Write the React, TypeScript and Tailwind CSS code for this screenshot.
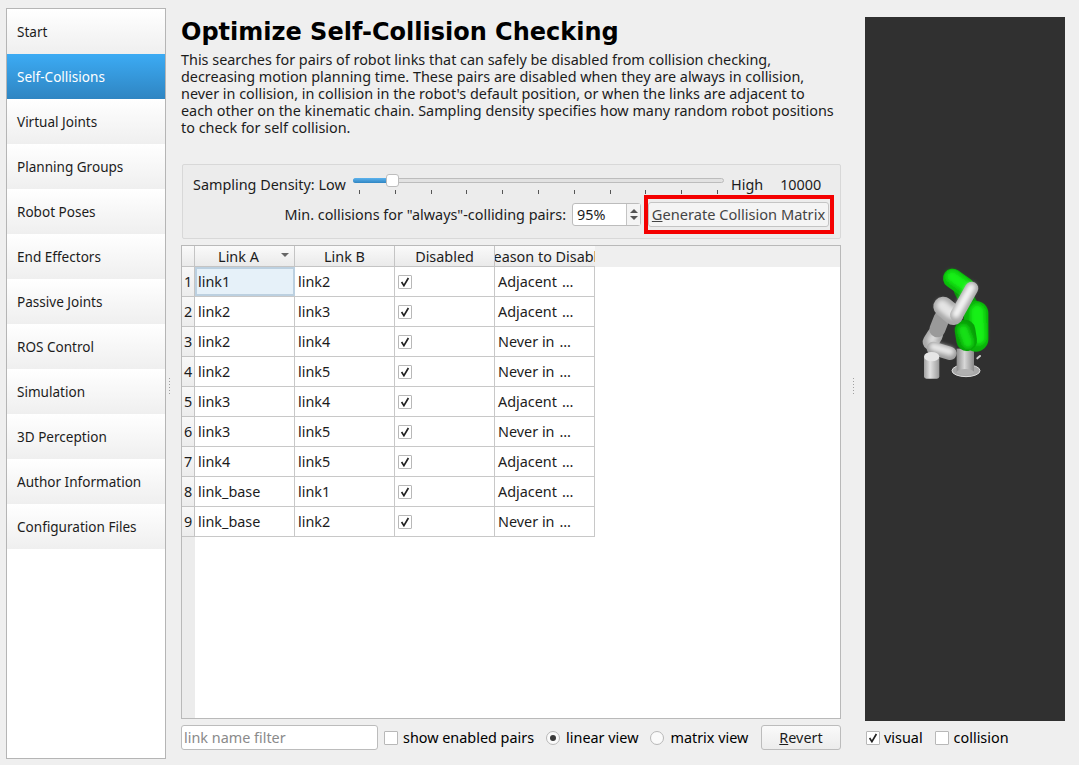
const NAV = [
  "Start",
  "Self-Collisions",
  "Virtual Joints",
  "Planning Groups",
  "Robot Poses",
  "End Effectors",
  "Passive Joints",
  "ROS Control",
  "Simulation",
  "3D Perception",
  "Author Information",
  "Configuration Files",
];

const ROWS = [
  ["link1", "link2", "Adjacent"],
  ["link2", "link3", "Adjacent"],
  ["link2", "link4", "Never in"],
  ["link2", "link5", "Never in"],
  ["link3", "link4", "Adjacent"],
  ["link3", "link5", "Never in"],
  ["link4", "link5", "Adjacent"],
  ["link_base", "link1", "Adjacent"],
  ["link_base", "link2", "Never in"],
];

function Check({ on }: { on?: boolean }) {
  return (
    <span className="flex h-[14px] w-[14px] shrink-0 items-center justify-center rounded-[1px] border border-[#b8b8b8] bg-white">
      {on && (
        <svg width="10" height="10" viewBox="0 0 10 10">
          <path d="M1.6 5 L3.9 8.6 L8.4 1" fill="none" stroke="#222" strokeWidth="1.7" />
        </svg>
      )}
    </span>
  );
}

function Radio({ on }: { on?: boolean }) {
  return (
    <span className="flex h-[14px] w-[14px] shrink-0 items-center justify-center rounded-full border border-[#b8b8b8] bg-[#fafafa]">
      {on && <span className="h-[6px] w-[6px] rounded-full bg-[#3a3a3a]" />}
    </span>
  );
}

function Grip() {
  return (
    <span className="flex flex-col gap-[2px]">
      {[0, 1, 2, 3, 4, 5].map((i) => (
        <span key={i} className="h-[1px] w-[1px] bg-[#a0a0a0]" />
      ))}
    </span>
  );
}

// traced from the reference at 3x, hence the 330x420 viewBox
function Robot() {
  return (
    <svg width="110" height="140" viewBox="0 0 330 420">
      <defs>
        <linearGradient id="column" x1="0" y1="0" x2="1" y2="0">
          <stop offset="0" stopColor="#8c8c8c" />
          <stop offset="0.45" stopColor="#d8d8d8" />
          <stop offset="1" stopColor="#8a8a8a" />
        </linearGradient>
        <linearGradient id="cap" x1="0" y1="0" x2="1" y2="0">
          <stop offset="0" stopColor="#a0a0a0" />
          <stop offset="0.4" stopColor="#e2e2e2" />
          <stop offset="1" stopColor="#9a9a9a" />
        </linearGradient>
        <filter id="soft" filterUnits="userSpaceOnUse" x="0" y="0" width="330" height="420">
          <feGaussianBlur stdDeviation="7" />
        </filter>
      </defs>
      {/* base */}
      <path d="M232 325 L240 318" stroke="#cfcfcf" strokeWidth="6" strokeLinecap="round" />
      <ellipse cx="198" cy="362" rx="42" ry="18" fill="#a8a8a8" stroke="#e0e0e0" strokeWidth="3" />
      <rect x="170" y="296" width="52" height="70" fill="url(#column)" />
      <ellipse cx="196" cy="366" rx="26" ry="9" fill="#b0b0b0" />
      {/* green neck and body */}
      <path d="M185 120 L215 175" stroke="#079a07" strokeWidth="48" strokeLinecap="round" />
      <path d="M228 190 L228 268" stroke="#0ab00a" strokeWidth="74" strokeLinecap="round" />
      <path d="M232 185 L236 262" stroke="#18f018" strokeWidth="44" strokeLinecap="round" filter="url(#soft)" />
      <path d="M195 240 L200 272" stroke="#079c07" strokeWidth="62" strokeLinecap="round" />
      <path d="M190 240 L204 278" stroke="#12e012" strokeWidth="34" strokeLinecap="round" filter="url(#soft)" />
      {/* green head */}
      <path d="M158 85 L196 112" stroke="#0ab80a" strokeWidth="58" strokeLinecap="round" />
      <path d="M156 80 L194 106" stroke="#18f018" strokeWidth="36" strokeLinecap="round" filter="url(#soft)" />
      {/* lower arm */}
      <path d="M105 255 L92 276" stroke="#a8a8a8" strokeWidth="48" strokeLinecap="round" />
      <path d="M108 250 L95 270" stroke="#dcdcdc" strokeWidth="24" strokeLinecap="round" filter="url(#soft)" />
      <path d="M100 295 L150 310" stroke="#9c9c9c" strokeWidth="40" strokeLinecap="round" />
      <path d="M100 290 L150 305" stroke="#e8e8e8" strokeWidth="24" strokeLinecap="round" filter="url(#soft)" />
      <rect x="72" y="318" width="46" height="68" rx="7" fill="url(#cap)" />
      <ellipse cx="95" cy="320" rx="23" ry="14" fill="#e6e6e6" />
      {/* shoulder */}
      <path d="M125 205 L112 238" stroke="#9a9a9a" strokeWidth="48" strokeLinecap="round" />
      <path d="M130 170 L160 195" stroke="#a8a8a8" strokeWidth="60" strokeLinecap="round" />
      <path d="M126 166 L152 188" stroke="#e4e4e4" strokeWidth="34" strokeLinecap="round" filter="url(#soft)" />
      {/* forearm */}
      <path d="M215 115 L170 195" stroke="#a8a8a8" strokeWidth="40" strokeLinecap="round" />
      <path d="M214 112 L168 192" stroke="#f4f4f4" strokeWidth="24" strokeLinecap="round" filter="url(#soft)" />
    </svg>
  );
}

export default function App() {
  return (
    <div className="flex h-[765px] w-[1079px] overflow-hidden bg-[#efefef] font-['Noto_Sans',sans-serif] text-[14.4px] leading-[20px] text-[#1c1c1c]">
      {/* step list */}
      <div className="mb-[6px] ml-[6px] mt-[8px] flex w-[160px] shrink-0 flex-col border border-[#b5b5b5] bg-white text-[13.55px]">
        {NAV.map((n) =>
          n === "Self-Collisions" ? (
            <div
              key={n}
              className="flex h-[45px] items-center bg-gradient-to-b from-[#3cabf4] to-[#2f85c2] pl-[10px] text-white"
            >
              {n}
            </div>
          ) : (
            <div
              key={n}
              className="flex h-[45px] items-center bg-gradient-to-b from-white to-[#efefef] pl-[10px]"
            >
              {n}
            </div>
          ),
        )}
      </div>

      {/* splitter */}
      <div className="flex w-[15px] shrink-0 items-center pl-[3px] pt-[6px]">
        <Grip />
      </div>

      {/* main */}
      <div className="flex w-[660px] shrink-0 flex-col">
        <h1 className="mt-[17px] font-['DejaVu_Sans',sans-serif] text-[24px] font-bold leading-[30px] text-black">
          Optimize Self-Collision Checking
        </h1>
        <p className="mt-[4px] w-[660px] whitespace-nowrap leading-[17px]">
          This searches for pairs of robot links that can safely be disabled from collision checking,
          <br />
          decreasing motion planning time. These pairs are disabled when they are always in collision,
          <br />
          never in collision, in collision in the robot's default position, or when the links are adjacent to
          <br />
          each other on the kinematic chain. Sampling density specifies how many random robot positions
          <br />
          to check for self collision.
        </p>

        {/* sampling box */}
        <div className="ml-[1px] mt-[28px] flex h-[75px] flex-col rounded-[2px] border border-[#d8d8d8] bg-[#ececec] pl-[10px] pr-[11px]">
          <div className="flex h-[37px] shrink-0 items-start">
            <span className="mt-[10px] w-[160px] shrink-0">Sampling Density: Low</span>
            <div className="relative mt-[9px] h-[20px] w-[371px] shrink-0">
              <div className="absolute left-0 top-[4px] h-[5px] w-full rounded-full border border-[#bcbcbc] bg-[#e2e2e2]" />
              <div className="absolute left-0 top-[4px] h-[5px] w-[35px] rounded-full bg-gradient-to-b from-[#5cb3ee] to-[#2f85c2]" />
              <div className="absolute left-[33px] top-0 h-[13px] w-[13px] rounded-[3px] border border-[#bdbdbd] bg-white" />
              <div className="absolute left-[6px] top-[16px] flex w-[359px] justify-between">
                {Array.from({ length: 11 }).map((_, i) => (
                  <span key={i} className="h-[4px] w-[1px] bg-[#555]" />
                ))}
              </div>
            </div>
            <span className="ml-[7px] mt-[10px]">High</span>
            <span className="ml-[17px] mt-[10px]">10000</span>
          </div>
          <div className="flex h-[25px] items-center justify-end">
            <span>Min. collisions for "always"-colliding pairs:</span>
            <div className="ml-[6px] flex h-[23px] w-[69px] items-center rounded-[3px] border border-[#bcbcbc] bg-white">
              <span className="flex-1 pl-[4px]">95%</span>
              <span className="flex h-full w-[14px] flex-col items-center justify-center gap-[3px] border-l border-[#c4c4c4] bg-[#f4f4f4]">
                <span className="h-0 w-0 border-x-[4px] border-b-[4px] border-x-transparent border-b-[#555]" />
                <span className="h-0 w-0 border-x-[4px] border-t-[4px] border-x-transparent border-t-[#555]" />
              </span>
            </div>
            <div className="relative ml-[7px] flex h-[25px] w-[181px] items-center justify-center whitespace-nowrap rounded-[3px] border border-[#c4c4c4] bg-[#f4f4f4] pb-[1px] text-[14.6px] text-[#444]">
              <span>
                <span className="underline">G</span>enerate Collision Matrix
              </span>
              {/* highlight annotated on the screenshot */}
              <div className="absolute bottom-[-8px] left-[-5px] right-[-6px] top-[-8px] border-4 border-[#f40000]" />
            </div>
          </div>
        </div>

        {/* pair table */}
        <div className="mt-[6px] flex h-[474px] flex-col border border-[#b9b9b9] bg-white">
          <div className="flex h-[21px] shrink-0 bg-[#efefef]">
            <div className="w-[13px] border-b border-r border-[#c4c4c4] bg-gradient-to-b from-[#fafafa] to-[#eaeaea]" />
            <div className="relative flex w-[100px] items-center justify-center border-b border-r border-[#c4c4c4] bg-gradient-to-b from-[#fafafa] to-[#eaeaea] pr-[12px] pt-[1px]">
              Link A
              <span className="absolute right-[5px] top-[7px] h-0 w-0 border-x-[4px] border-t-[4px] border-x-transparent border-t-[#666]" />
            </div>
            <div className="flex w-[100px] items-center justify-center border-b border-r border-[#c4c4c4] bg-gradient-to-b from-[#fafafa] to-[#eaeaea] pt-[1px]">
              Link B
            </div>
            <div className="flex w-[100px] items-center justify-center border-b border-r border-[#c4c4c4] bg-gradient-to-b from-[#fafafa] to-[#eaeaea] pt-[1px]">
              Disabled
            </div>
            <div className="flex w-[100px] items-center justify-center overflow-hidden whitespace-nowrap border-b border-[#c4c4c4] bg-gradient-to-b from-[#fafafa] to-[#eaeaea] pt-[1px]">
              Reason to Disable
            </div>
          </div>
          <div className="flex flex-1">
            <div className="flex w-[13px] shrink-0 flex-col bg-[#ececec]">
              {ROWS.map((_, i) => (
                <div
                  key={i}
                  className="flex h-[30px] items-center justify-center border-b border-r border-[#c4c4c4] bg-gradient-to-b from-[#f8f8f8] to-[#ececec]"
                >
                  {i + 1}
                </div>
              ))}
            </div>
            <div className="flex flex-col">
              {ROWS.map((r, i) => (
                <div key={i} className="flex h-[30px] border-b border-[#c8c8c8]">
                  <div
                    className={
                      i === 0
                        ? "flex w-[100px] items-center border-2 border-[#bcd0e0] bg-[#e6f1f9] pl-[1px]"
                        : "flex w-[100px] items-center border-r border-[#c8c8c8] pl-[3px]"
                    }
                  >
                    {r[0]}
                  </div>
                  <div className="flex w-[100px] items-center border-r border-[#c8c8c8] pl-[3px]">{r[1]}</div>
                  <div className="flex w-[100px] items-center border-r border-[#c8c8c8] pl-[3px]">
                    <Check on />
                  </div>
                  <div className="flex w-[100px] items-center whitespace-nowrap border-r border-[#c8c8c8] pl-[3px]">
                    {r[2]}
                    <span className="ml-[5px] tracking-[1px]">…</span>
                  </div>
                </div>
              ))}
            </div>
          </div>
        </div>

        {/* filter row */}
        <div className="mt-[6px] flex h-[25px] items-center whitespace-nowrap">
          <div className="flex h-[25px] w-[197px] items-center rounded-[3px] border border-[#bcbcbc] bg-white pl-[2px] text-[#8a8a8a]">
            link name filter
          </div>
          <span className="ml-[6px]">
            <Check />
          </span>
          <span className="ml-[5px] text-black">show enabled pairs</span>
          <span className="ml-[12px]">
            <Radio on />
          </span>
          <span className="ml-[6px] text-black">linear view</span>
          <span className="ml-[12px]">
            <Radio />
          </span>
          <span className="ml-[6px] text-black">matrix view</span>
          <div className="ml-auto flex h-[25px] w-[80px] items-center justify-center rounded-[3px] border border-[#bcbcbc] bg-gradient-to-b from-[#fafafa] to-[#ececec]">
            <span>
              <span className="underline">R</span>evert
            </span>
          </div>
        </div>
      </div>

      {/* splitter */}
      <div className="flex w-[24px] shrink-0 items-center justify-center pt-[6px]">
        <Grip />
      </div>

      {/* robot view */}
      <div className="flex w-[200px] shrink-0 flex-col">
        <div className="mt-[17px] h-[704px] bg-[#303030] pl-[35px] pt-[233px]">
          <Robot />
        </div>
        <div className="ml-[1px] mt-[7px] flex items-center text-black">
          <Check on />
          <span className="ml-[4px]">visual</span>
          <span className="ml-[12px]">
            <Check />
          </span>
          <span className="ml-[5px]">collision</span>
        </div>
      </div>
    </div>
  );
}
